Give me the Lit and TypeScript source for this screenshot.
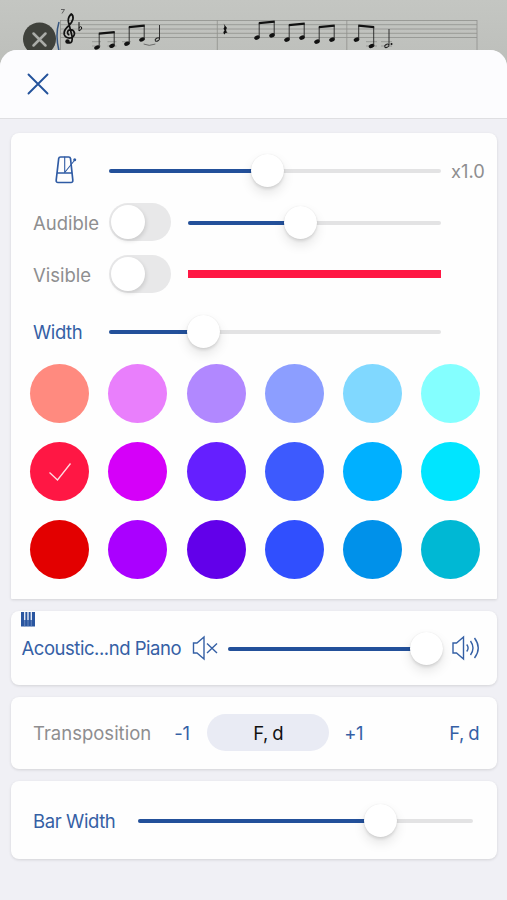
import { LitElement, html, css, svg } from "lit";
import { customElement, property } from "lit/decorators.js";

@customElement("value-slider")
class ValueSlider extends LitElement {
  @property({ type: Number }) value = 0;
  static styles = css`
    :host { display: block; height: 33px; position: relative; }
    .rail { position: absolute; left: 0; right: 0; top: 15px; height: 4px; border-radius: 2px; background: #e3e3e4; overflow: hidden; }
    .fill { height: 100%; background: #23509a; }
    .thumb { position: absolute; top: 0; width: 33px; height: 33px; margin-left: -16.5px; border-radius: 50%; background: #fff;
      box-shadow: 0 0 1px rgba(0,0,0,.1), 0 2px 3px rgba(0,0,0,.1), 0 6px 12px rgba(0,0,0,.1); }
  `;
  render() {
    return html`<div class="rail"><div class="fill" style="width:${this.value}%"></div></div>
      <div class="thumb" style="left:${this.value}%"></div>`;
  }
}

const palette = [
  "#ff8a7f", "#e97ffc", "#b188ff", "#8c9eff", "#80d8ff", "#84ffff",
  "#ff1744", "#d500f9", "#651fff", "#3d5afe", "#00b0ff", "#00e5ff",
  "#e30000", "#aa00ff", "#6200ea", "#304ffe", "#0091ea", "#00b8d4",
];
const selected = 6;

/* Beamed pairs: x1, y1, x2, y2, beam left y, beam right y */
const pairs = [
  [97, 47.5, 112, 45.8, 33.5, 32],
  [127, 43.7, 142, 39.5, 27, 25.5],
  [257, 37.6, 272, 35.4, 23, 21.5],
  [287, 39.6, 302, 37.6, 25, 23.5],
  [317, 41.6, 332, 39.6, 27, 25.5],
  [356.5, 39.6, 371.5, 46, 25.5, 27],
];
const head = (x: number, y: number) => svg`<ellipse cx=${x} cy=${y} rx="2.9" ry="2" transform="rotate(-24 ${x} ${y})"/>`;

@customElement("app-root")
class AppRoot extends LitElement {
  static styles = css`
    :host { display: block; height: 900px; overflow: hidden; background: #c0c2be; font: 18.5px/24px Inter, "Liberation Sans", sans-serif; color: #8e8e90; }
    * { box-sizing: border-box; }
    .page { height: 900px; display: flex; flex-direction: column; }
    .score { height: 50px; flex: none; display: block; overflow: visible; }
    .sheet { flex: 1; background: #f0f0f5; border-radius: 17px 17px 0 0; overflow: hidden; z-index: 1; }
    .head { height: 69px; background: #fcfcfe; border-bottom: 1px solid #dfdfe2; display: flex; align-items: center; padding: 0 0 1px 26px; }
    .cards { padding: 14px 10px 0 11px; display: flex; flex-direction: column; gap: 12px; }
    .card { background: #fefefe; border-radius: 8px; box-shadow: 0 1px 3px rgba(0,0,0,.12); display: flex; align-items: center; }
    .main { height: 466px; display: block; padding: 11px 0 0; border-radius: 8px 8px 1px 1px; }
    .row { display: flex; align-items: center; height: 52px; padding-left: 22px; }
    .row.wide { height: 62px; }
    .lab { width: 76px; flex: none; white-space: nowrap; padding-top: 1px; }
    .blue { color: #3560a5; }
    .row .blue { letter-spacing: -.4px; }
    .track { width: 332px; flex: none; }
    .track.short { width: 253px; margin-left: 17px; }
    .val { margin-left: 10px; padding-top: 1px; font-size: 18.3px; }
    .metro { display: block; margin: -1px 0 0 20px; }
    .toggle { width: 62px; height: 38px; border-radius: 19px; background: #e8e8e9; padding: 2px 1.500px; flex: none; }
    .knob { width: 34px; height: 34px; border-radius: 50%; background: #fff; box-shadow: 1px 2px 4px rgba(0,0,0,.13); }
    .line { width: 253px; height: 8px; margin-left: 17px; background: #ff1744; }
    .swatches { display: grid; grid-template-columns: repeat(6, 59px); column-gap: 19.3px; row-gap: 19.2px; padding: 2px 0 0 19px; }
    .swatch { width: 59px; height: 59px; border-radius: 50%; display: flex; align-items: center; justify-content: center; }
    .piano { height: 73.500px; display: block; padding-left: 10px; }
    .keys { display: block; height: 17px; }
    .prow { display: flex; align-items: center; height: 40px; }
    .name { width: 170px; white-space: nowrap; letter-spacing: -.46px; padding-left: .5px; }
    .vol { width: 214px; margin-left: 9px; }
    .loud { margin-left: 10px; }
    .trans { height: 72.500px; padding: 0 18px 0 22px; }
    .minus { width: 17px; margin-left: 23px; letter-spacing: -.3px; }
    .key { width: 122px; height: 37px; margin: 0 15px 0 16px; border-radius: 19px; background: #e9ebf4; color: #111; display: flex; align-items: center; justify-content: center; letter-spacing: -.6px; }
    .plus { letter-spacing: -.5px; }
    .tail { margin-left: auto; letter-spacing: -.6px; }
    .bar { height: 78px; padding-left: 22px; }
    .bar .lab { width: 105px; letter-spacing: -.4px; }
    .bar .track { width: 335px; }
    svg { flex: none; }
  `;

  score() {
    return html`<svg class="score" width="507" height="50" viewBox="0 0 507 50">
      <defs><linearGradient id="g" x1="0" y1="0" x2="0" y2="1"><stop offset="0" stop-color="#c4c6c2"/><stop offset="1" stop-color="#bcbeba"/></linearGradient></defs>
      <rect width="507" height="70" fill="url(#g)"/>
      <g stroke="#8f918d" stroke-width=".8" fill="none">
        ${[20.5, 24.7, 29, 33.3, 37.5].map((y) => svg`<path d="M60 ${y}H477"/>`)}
        ${[60.5, 217.3, 346.8, 477].map((x) => svg`<path d="M${x} 20V50"/>`)}
        <path d="M92 41.7h9M92 46h9M107.500 41.700h9M107.500 46h9M122 41.700h9M366 41.700h11M366 46h11M381 41.700h11M381 46h11"/>
      </g>
      <path d="M59 22q-4 13 0 29" fill="none" stroke="#35557f" stroke-width="1.500"/>
      <circle cx="39.500" cy="39" r="16.500" fill="#40423c"/>
      <path d="M33.500 33.500l12 12M45.500 33.500l-12 12" stroke="#aaaca8" stroke-width="2.500" stroke-linecap="round"/>
      <path d="M61 9.500h3.500l-2.500 4" fill="none" stroke="#555" stroke-width=".9"/>
      <g fill="none" stroke="#111" stroke-linecap="round">
        <path d="M67.200 42q3 2 4.600-.5q.8-2 .2-5.500l-3.700-14.500q-.5-4.500 3-7.500q2.200 1.500 1.700 5q-.8 3.500-4.500 7q-5 4-4.300 8.500q1.500 4 6.300 3.500q4-1 4-5q-1-3.500-4-3.500q-3 .5-3 3q.2 1.500 1.200 2.200" stroke-width="1.700"/>
        <path d="M79 22.500v8.500q4-2 2.500-4q-1-1-2.500.5" stroke-width="1"/>
        <path d="M144 44.200q5 2.500 11 0" stroke="#555" stroke-width=".8"/>
      </g>
      <circle cx="67.500" cy="41.500" r="2.200" fill="#111"/>
      <g fill="#111">
        ${pairs.map(([a, b, c, d, e, f]) => svg`${head(a, b)}${head(c, d)}
          <path d="M${a + 2.2} ${b}V${e}M${c + 2.2} ${d}V${f}" stroke="#222" stroke-width=".9"/>
          <path d="M${a + 1.8} ${e - 1}L${c + 2.700} ${f - 1}v2.300L${a + 1.8} ${e + 1.3}z"/>`)}
        <path d="M223.500 23.500l3.500 4.500q-2 2 .5 5q-3-1-2.500 1.500q-3-1.500-.5-4l-1-2q1.800-2 0-5z"/>
        <circle cx="391.500" cy="44" r="1"/>
      </g>
      <g fill="none" stroke="#222">
        <ellipse cx="157.300" cy="39.500" rx="2.300" ry="1.500" transform="rotate(-30 157.300 39.500)"/>
        <ellipse cx="386.800" cy="45.800" rx="2.300" ry="1.500" transform="rotate(-30 386.800 45.800)"/>
        <path d="M159.500 39V25M389 45V29" stroke-width=".9"/>
      </g>
    </svg>`;
  }

  render() {
    return html`<div class="page">
      ${this.score()}
      <div class="sheet">
        <div class="head"><svg width="24" height="24" viewBox="0 0 24 24"><path d="M2.500 2.500l19 19M21.500 2.500l-19 19" stroke="#23529b" stroke-width="1.900" stroke-linecap="round"/></svg></div>
        <div class="cards">
          <div class="card main">
            <div class="row"><div class="lab"><svg class="metro" width="26" height="30" viewBox="0 0 26 30" fill="none" stroke="#2f5ba4" stroke-width="1.700" stroke-linejoin="round" stroke-linecap="round">
              <path d="M7.500 2h8.200q1.500 0 1.800 1.500l2.300 21.500q.2 2.500-1.800 2.500H5q-2 0-1.800-2.500L5.700 3.500Q6 2 7.500 2zM4.400 18h14.400"/><path d="M11.700 2v15.500L21 6" stroke-width="1.100"/><circle cx="21.700" cy="4.800" r="1.500" fill="#2f5ba4" stroke="none"/></svg></div>
              <value-slider class="track" .value=${47.6}></value-slider><span class="val">x1.0</span></div>
            <div class="row"><div class="lab">Audible</div><div class="toggle"><div class="knob"></div></div><value-slider class="track short" .value=${44.3}></value-slider></div>
            <div class="row"><div class="lab">Visible</div><div class="toggle"><div class="knob"></div></div><div class="line"></div></div>
            <div class="row wide"><div class="lab blue">Width</div><value-slider class="track" .value=${28.5}></value-slider></div>
            <div class="swatches">${palette.map((c, i) => html`<div class="swatch" style="background:${c}">${i === selected ? html`<svg width="24" height="20" viewBox="0 0 24 20"><path d="M1.500 10.500l8 7.500L22.500 1.500" fill="none" stroke="#ffdce2" stroke-width="1.300"/></svg>` : ""}</div>`)}</div>
          </div>
          <div class="card piano">
            <svg class="keys" width="14" height="17" viewBox="0 0 14 17"><path d="M0 1h14v14.500H0z" fill="#2a56a0"/><path d="M3.700 9v6.500M7 9v6.500M10.300 9v6.500" stroke="#7f9bc9" stroke-width=".7"/><path d="M3.700 1v8M7 1v8M10.300 1v8" stroke="#e5ebf5" stroke-width="1.400"/></svg>
            <div class="prow"><span class="name blue">Acoustic...nd Piano</span>
              <svg width="28" height="26" viewBox="0 0 28 26" fill="none" stroke="#3560a5" stroke-width="1.400"><path d="M2.500 8h3.500l7-6v22L6 18H2.500z"/><path d="M16 8.500l10 9.500M26 8.500L16 18"/></svg>
              <value-slider class="vol" .value=${92.7}></value-slider>
              <svg class="loud" width="28" height="26" viewBox="0 0 28 26" fill="none" stroke="#3560a5" stroke-width="1.400"><path d="M1 8h3.500l7-6v22l-7-6H1z"/><path d="M14.700 9.500q2.800 3.500 0 7M18.500 6q5 7 0 14M22.500 3q7.500 10 0 20"/></svg>
            </div>
          </div>
          <div class="card trans"><span>Transposition</span><span class="minus blue">-1</span><div class="key">F, d</div><span class="plus blue">+1</span><span class="tail blue">F, d</span></div>
          <div class="card bar"><div class="lab blue">Bar Width</div><value-slider class="track" .value=${72.4}></value-slider></div>
        </div>
      </div>
    </div>`;
  }
}
